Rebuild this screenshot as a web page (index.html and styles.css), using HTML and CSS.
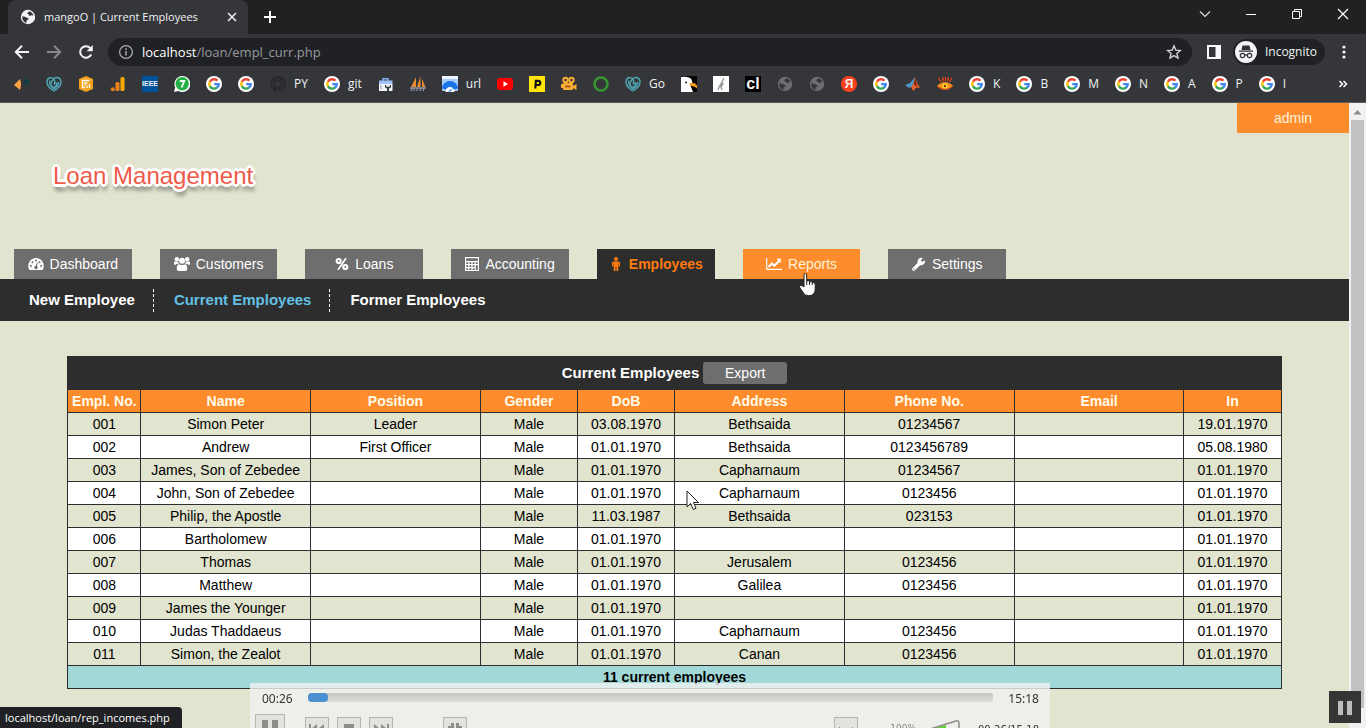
FILE: index.html
```html
<!DOCTYPE html>
<html lang="en">
<head>
<meta charset="utf-8">
<title>mangoO | Current Employees</title>
<link rel="stylesheet" href="styles.css">
</head>
<body>
<svg class="sprite" aria-hidden="true">
  <symbol id="google" viewBox="0 0 16 16">
    <circle cx="8" cy="8" r="8" fill="#fff"/>
    <g fill="none" stroke-width="2.400">
      <path d="M11.5 4.7A4.7 4.7 0 0 0 3.9 5.8" stroke="#ea4335"/>
      <path d="M3.9 5.7A4.7 4.7 0 0 0 3.9 10.3" stroke="#fbbc05"/>
      <path d="M3.9 10.2A4.7 4.7 0 0 0 11.2 11.4" stroke="#34a853"/>
      <path d="M11 11.6A4.7 4.7 0 0 0 12.7 8.1H8.2" stroke="#4285f4"/>
    </g>
  </symbol>
  <symbol id="globe" viewBox="0 0 16 16">
    <circle cx="8" cy="8" r="7.200" fill="currentColor"/>
    <path d="M2.300 7.200c1.500.5 3.300.3 4.200 1.200.8.8 2 .4 2.100 1.400.1 1-1.600.9-1.900 1.900-.2.700-.2 1.300-.3 2.200-2.700-.8-4.600-3.700-4.100-6.700zM9 2.300c.3.900-1.600 1.100-1.700 1.900 0 .9 1.500.7 1.600 1.700.1 1 1.300 1.100 1.900.7.700-.5 1.700-.4 2.500.2C13 4.400 11.300 2.700 9 2.300z" fill="#35363a"/>
  </symbol>
  <symbol id="gecko" viewBox="0 0 16 16">
    <g fill="none" stroke="#4fa9b8" stroke-width="1.400">
      <path d="M8 15C3 12 .8 8.500 1 5.500 1.300 1.500 6 .3 8 3.300c1 1.700.8 3.600 0 5.200"/>
      <path d="M8 15c5-3 7.200-6.500 7-9.500C14.700 1.500 10 .3 7.500 3 5.200 5.500 4.300 8.800 6 10.500c2 1.800 4.700 0 5-3.300H8.500"/>
      <path d="M3.800 4.500C3 8 4.800 10.800 8 12.800c2.800-1.700 4.600-4 4.800-6.800"/>
    </g>
  </symbol>
</svg>

<header class="browser">
  <div class="tabstrip">
    <div class="tab">
      <svg class="i16"><use href="#globe"/></svg>
      <span class="tab-title">mangoO | Current Employees</span>
      <button class="bare" aria-label="Close tab"><svg class="i12" viewBox="0 0 12 12"><path d="M2 2l8 8M10 2l-8 8" stroke="#e8eaed" stroke-width="1.600"/></svg></button>
    </div>
    <button class="bare newtab" aria-label="New tab"><svg class="i14" viewBox="0 0 14 14"><path d="M7 1v12M1 7h12" stroke="#fff" stroke-width="2"/></svg></button>
    <div class="window-buttons">
      <button class="bare" aria-label="Search tabs"><svg class="i12" viewBox="0 0 12 12"><path d="M1 3.500l5 5 5-5" fill="none" stroke="#ddd" stroke-width="1.200"/></svg></button>
      <button class="bare" aria-label="Minimize"><svg class="i12" viewBox="0 0 12 12"><path d="M1 6.500h10" stroke="#fff"/></svg></button>
      <button class="bare" aria-label="Restore"><svg class="i12" viewBox="0 0 12 12"><path d="M1.500 3.500h7v7h-7zM3.500 3.500v-2h7v7h-2" fill="none" stroke="#fff"/></svg></button>
      <button class="bare" aria-label="Close"><svg class="i12" viewBox="0 0 12 12"><path d="M1 1l10 10M11 1L1 11" stroke="#fff" stroke-width="1.200"/></svg></button>
    </div>
  </div>

  <div class="toolbar">
    <button class="bare" aria-label="Back"><svg class="i16" viewBox="0 0 16 16"><path d="M15 8H2M8 1.800L1.800 8 8 14.200" fill="none" stroke="#f1f3f4" stroke-width="2"/></svg></button>
    <button class="bare" aria-label="Forward"><svg class="i16" viewBox="0 0 16 16"><path d="M1 8h13M8 1.800L14.200 8 8 14.200" fill="none" stroke="#85878a" stroke-width="2"/></svg></button>
    <button class="bare" aria-label="Reload"><svg class="i16" viewBox="0 0 16 16"><path d="M13.200 10.500A5.800 5.800 0 1 1 12.400 4.200" fill="none" stroke="#f1f3f4" stroke-width="2"/><path d="M14.800 1v6.200H8.600z" fill="#f1f3f4"/></svg></button>
    <div class="omnibox">
      <svg class="i16" viewBox="0 0 16 16"><circle cx="8" cy="8" r="6.400" fill="none" stroke="#a6a9ad" stroke-width="1.300"/><path d="M8 7v4.500M8 4.300v1.600" stroke="#a6a9ad" stroke-width="1.500"/></svg>
      <span class="url"><b>localhost</b>/loan/empl_curr.php</span>
      <svg class="i16" viewBox="0 0 16 16"><path d="M8 1.800l1.800 4.300 4.600.4-3.500 3 1.100 4.500-4-2.400L4 14l1.100-4.500-3.500-3 4.600-.4z" fill="none" stroke="#cfd1d4" stroke-width="1.400"/></svg>
    </div>
    <button class="bare panel-button" aria-label="Side panel"><svg class="i14" viewBox="0 0 14 14"><path d="M0 0h14v14H0zM2 2v10h6.500V2z" fill="#f8f8fa" fill-rule="evenodd"/></svg></button>
    <div class="incognito">
      <svg class="i22" viewBox="0 0 22 22"><circle cx="11" cy="11" r="11" fill="#f1f3f4"/><path d="M7.500 4.500h7L15.500 9h-9zM4 9.500h14v1.200H4z" fill="#303134"/><g fill="none" stroke="#303134" stroke-width="1.200"><circle cx="7.500" cy="14.500" r="2.200"/><circle cx="14.500" cy="14.500" r="2.200"/><path d="M9.700 14.300q1.300-.8 2.600 0"/></g></svg>
      <span>Incognito</span>
    </div>
    <button class="bare" aria-label="Menu"><svg class="i16" viewBox="0 0 16 16" fill="#f1f3f4"><circle cx="8" cy="3" r="1.600"/><circle cx="8" cy="8" r="1.600"/><circle cx="8" cy="13" r="1.600"/></svg></button>
  </div>

  <nav class="bookmarks" aria-label="Bookmarks">
    <a href="#" aria-label="Kite"><svg class="i16" viewBox="0 0 16 16"><path d="M0 9l6-6q2 6 0 11z" fill="#ffa347"/><path d="M10 2l6 4-5 4z" fill="#0b3c44"/></svg></a>
    <a href="#" aria-label="Gecko"><svg class="i16"><use href="#gecko"/></svg></a>
    <a href="#" aria-label="Stats"><svg class="i16" viewBox="0 0 16 16"><path d="M8 0l7 3v10l-7 3-7-3V3z" fill="#f3a11c"/><path d="M11.500 4.500H4.500v7H7M9.500 7H7v2.500M9 12V9.500M11.500 12V8" fill="none" stroke="#fff" stroke-width="1.300"/></svg></a>
    <a href="#" aria-label="Analytics"><svg class="i16" viewBox="0 0 16 16"><rect x="10.500" y="1" width="4" height="14" rx="1.500" fill="#f9ab00"/><rect x="5.500" y="6" width="4" height="9" rx="1.500" fill="#e8821e"/><circle cx="2.800" cy="13.200" r="2" fill="#e8821e"/></svg></a>
    <a href="#" aria-label="IEEE"><span class="fav ieee">IEEE</span></a>
    <a href="#" aria-label="Chat"><svg class="i16" viewBox="0 0 16 16"><path d="M0 16L1.200 11.500A8 8 0 1 1 4.500 15z" fill="#fff"/><circle cx="8.200" cy="7.800" r="6.700" fill="#25b045"/><path d="M5.800 5h4.400L7.600 11.500" fill="none" stroke="#fff" stroke-width="1.800"/></svg></a>
    <a href="#" aria-label="Google"><svg class="i16"><use href="#google"/></svg></a>
    <a href="#" aria-label="Google"><svg class="i16"><use href="#google"/></svg></a>
    <a href="#"><svg class="i16" viewBox="0 0 16 16"><path d="M8 1a7 7 0 0 0-2.200 13.600c.4 0 .5-.2.500-.5v-1.600c-2 .4-2.600-1-2.900-1.700M8 1a7 7 0 0 1 2.200 13.600c-.4 0-.5-.2-.5-.5V12c0-.7-.2-1.100-.5-1.400 3-.4 3.600-3.600 2.200-5.100V3.700c-.9 0-1.600.5-2 .8H6.600c-.4-.3-1.100-.8-2-.8v1.800c-1.400 1.500-.8 4.700 2.200 5.100" fill="none" stroke="#26282b" stroke-width="1.800"/></svg>PY</a>
    <a href="#"><svg class="i16"><use href="#google"/></svg>git</a>
    <a href="#" aria-label="Toolbox"><svg class="i16" viewBox="0 0 16 16"><path d="M5 5V2.800h5V5" fill="none" stroke="#8ab4f8" stroke-width="1.400"/><rect x="1" y="4.500" width="13.500" height="3.500" fill="#9fc2fb"/><rect x="1" y="8" width="13.500" height="7" fill="#f1f3f4"/><path d="M7 9v2.500l2 1V15h2v-2.500l2-1V9h-1.300v1.700H8.300V9z" fill="#3c4043"/><path d="M3 9v4" stroke="#9aa0a6"/></svg></a>
    <a href="#" aria-label="Sails"><svg class="i16" viewBox="0 0 16 16"><path d="M6 1L1 11h5zM10.500 0L7 11h3.500zM12 3v8h3.500z" fill="#e78b2f"/><path d="M0 12h16M1 15l1-3M4 15v-3M7 15v-3M10 15l1-3M13 15l1-3" stroke="#8d93a8" stroke-width="1.300"/></svg></a>
    <a href="#"><svg class="i16" viewBox="0 0 16 16"><rect width="16" height="15" rx="1" fill="#a8cdfd"/><rect width="16" height="3" fill="#eef5ff"/><path d="M0 12.500a8 7.500 0 0 1 16 0l-4 1H4z" fill="#1a73e8"/><path d="M3.500 16a4.500 5 0 0 1 9 0z" fill="#fff"/><path d="M6 15.500l5-3.500-2.500 3.500z" fill="#1a73e8"/></svg>url</a>
    <a href="#" aria-label="YouTube"><svg class="i16" viewBox="0 0 16 16"><rect y="2" width="16" height="12" rx="3" fill="#f00"/><path d="M6.500 5.200v5.600L11 8z" fill="#fff"/></svg></a>
    <a href="#" aria-label="P"><svg class="i16" viewBox="0 0 16 16"><rect width="16" height="16" fill="#ffe50b"/><path d="M6.300 12.500L6.900 4.900h2.300a2 2 0 0 1 0 4.100H6.800" fill="none" stroke="#111" stroke-width="2.200"/></svg></a>
    <a href="#" aria-label="Camera"><svg class="i16" viewBox="0 0 16 16"><g fill="#f9ae33"><circle cx="4.500" cy="4" r="3.200"/><circle cx="10.500" cy="4" r="3.200"/><rect x="2" y="7" width="10" height="7" rx="1"/><path d="M12 10l3.500-2v6L12 12zM0 8h3v4H0z"/></g><circle cx="4.500" cy="4" r="1.200" fill="#35363a"/><circle cx="10.500" cy="4" r="1.200" fill="#35363a"/><path d="M4 10.500h5.500" stroke="#a5550d" stroke-width="1.800"/></svg></a>
    <a href="#" aria-label="Ring"><svg class="i16" viewBox="0 0 16 16"><circle cx="8" cy="8" r="6.500" fill="none" stroke="#35962f" stroke-width="2.600"/></svg></a>
    <a href="#"><svg class="i16"><use href="#gecko"/></svg>Go</a>
    <a href="#" aria-label="Eagle"><svg class="i16" viewBox="0 0 16 16"><rect width="16" height="16" fill="#050505"/><path d="M0 1q8-1 10.500 2.500 1 2 .5 4L9 8.500 12 16H0z" fill="#fff"/><path d="M8.500 7.500q5-2 7.500 2v3q-2-3-7-2.500z" fill="#f49b24"/><circle cx="5" cy="6.500" r="1" fill="#222"/></svg></a>
    <a href="#" aria-label="Sketch"><svg class="i16" viewBox="0 0 16 16"><rect width="16" height="16" fill="#fff"/><path d="M11 2l-2 4 1 2-2 3 1 3M9 6L6 11l-1 3M9 8l-2 3" fill="none" stroke="#9b9b9b" stroke-width="1.400"/></svg></a>
    <a href="#" aria-label="cl"><span class="fav cl">cl</span></a>
    <a href="#" aria-label="Site"><svg class="i16 dim"><use href="#globe"/></svg></a>
    <a href="#" aria-label="Site"><svg class="i16 dim"><use href="#globe"/></svg></a>
    <a href="#" aria-label="Yandex"><span class="fav yandex">Я</span></a>
    <a href="#" aria-label="Google"><svg class="i16"><use href="#google"/></svg></a>
    <a href="#" aria-label="Matlab"><svg class="i16" viewBox="0 0 16 16"><path d="M0 9l5-2 5-6-2 9-4 2z" fill="#4d95c9"/><path d="M10 1q2 7 5 11-3-1-4 0l-3 3-2-4q3-3 4-10z" fill="#e2622c"/><path d="M10 1l-1 7 3 3z" fill="#6d1f12"/></svg></a>
    <a href="#" aria-label="Eye"><svg class="i16" viewBox="0 0 16 16"><path d="M0 10q4-4 8-4t8 4q-4 4-8 4t-8-4z" fill="#f7941d"/><path d="M1.500 2L4 6M5.500 1L6.500 5M8.500 1v4M11.500 1L10.500 5M15 2L12.500 6" stroke="#e8401c" stroke-width="1.400"/><circle cx="8" cy="10" r="2.500" fill="#ffde37"/><circle cx="8" cy="10" r="1.200" fill="#8b2a0b"/><path d="M0 10q8 7 16 0" fill="none" stroke="#d3401c"/></svg></a>
    <a href="#"><svg class="i16"><use href="#google"/></svg>K</a>
    <a href="#"><svg class="i16"><use href="#google"/></svg>B</a>
    <a href="#"><svg class="i16"><use href="#google"/></svg>M</a>
    <a href="#"><svg class="i16"><use href="#google"/></svg>N</a>
    <a href="#"><svg class="i16"><use href="#google"/></svg>A</a>
    <a href="#"><svg class="i16"><use href="#google"/></svg>P</a>
    <a href="#"><svg class="i16"><use href="#google"/></svg>I</a>
    <button class="bare more" aria-label="More bookmarks"><svg class="i12" viewBox="0 0 12 12"><path d="M2.500 3l3 3-3 3M6.500 3l3 3-3 3" fill="none" stroke="#fff" stroke-width="1.500"/></svg></button>
  </nav>
</header>

<div class="viewport">
  <main class="page">
    <div class="banner">
      <a class="user" href="#">admin</a>
      <h1 class="brand">Loan Management</h1>
    </div>

    <nav class="tabs" aria-label="Main">
      <a href="#"><svg class="i16" viewBox="0 0 16 16"><path d="M8 2a8 8 0 0 0-6.700 12h13.400A8 8 0 0 0 8 2z" fill="#fff"/><g fill="#6e6e6e"><circle cx="2.900" cy="10" r="1"/><circle cx="4.500" cy="6.300" r="1"/><circle cx="8" cy="4.500" r="1"/><circle cx="11.500" cy="6.300" r="1"/><circle cx="13.100" cy="10" r="1"/><circle cx="8" cy="11.500" r="1.700"/><path d="M7.400 11L8.900 6.400l.8.200L8.700 11.500z"/></g></svg>Dashboard</a>
      <a href="#"><svg class="i16" viewBox="0 0 16 16" fill="#fff"><circle cx="2.800" cy="3.300" r="2.200"/><circle cx="13.200" cy="3.300" r="2.200"/><circle cx="8" cy="4.800" r="3"/><path d="M0 6.500q0-1.300 1.200-1L4.300 5.800q.2 1.300 1 2H3L1 9Q0 9 0 8zM16 6.500q0-1.300-1.200-1l-3.100.3q-.2 1.300-1 2H13l2 1.200q1 0 1-1zM4.500 8.300q3.500 1.500 7 0Q13.300 9 13.300 13q0 2-2 2H4.700q-2 0-2-2 0-4 1.800-4.700z"/></svg>Customers</a>
      <a href="#"><svg class="i14" viewBox="0 0 14 14" fill="none" stroke="#fff"><circle cx="3.700" cy="4" r="2" stroke-width="2.200"/><circle cx="10.300" cy="10" r="2" stroke-width="2.200"/><path d="M11 1.200L3 12.800" stroke-width="1.700"/></svg>Loans</a>
      <a href="#"><svg class="i14" viewBox="0 0 14 14"><path d="M0 0h14v14H0zM1.200 1.200v2.800h11.600V1.200zM1.200 5.200v1.800h2V5.200zM4.400 5.200v1.800h2V5.200zM7.600 5.200v1.800h2V5.200zM10.800 5.200v1.800h2V5.200zM1.200 8.200V10h2V8.200zM4.400 8.200V10h2V8.200zM7.600 8.200V10h2V8.200zM1.200 11.200v1.700h2v-1.700zM4.400 11.200v1.700h2v-1.700zM7.600 11.200v1.700h2v-1.700zM10.800 8.200v4.700h2V8.200z" fill="#fff" fill-rule="evenodd"/></svg>Accounting</a>
      <a class="active" href="#"><svg class="i14" viewBox="0 0 14 14" fill="#ff7a0d"><circle cx="7" cy="2" r="2"/><path d="M4.500 4.500h5Q11 4.500 11 6v3.500H9.700V6.500h-.4V14H7.400v-4h-.8v4H4.700V6.500h-.4v3H3V6q0-1.500 1.500-1.500z"/></svg>Employees</a>
      <a class="hover" href="#"><svg class="i16" viewBox="0 0 16 16" fill="none" stroke="#fff"><path d="M.7 2v11.300H16" stroke-width="1.200"/><path d="M2.500 11L6 7.500l2.300 2.300L13 5" stroke-width="2"/><path d="M10.300 2.800h4.500v4.500z" fill="#fff" stroke="none"/></svg>Reports
        <svg class="hand" viewBox="0 0 18 24"><path d="M5 2q0-1.500 1.300-1.500T7.700 2v6q2.400-1 2.800.8 2-.8 2.700.9 3-.7 3 1.500v5q0 3-1.500 4.500-1.500 2-5 2Q6 22.700 4.500 20L1 15q-1-2 .5-2.500T5 14z" fill="#fff" stroke="#222" stroke-width="1"/><path d="M7.700 8v4M10.500 8.500V12M13.200 9.500V12" stroke="#222"/></svg>
      </a>
      <a href="#"><svg class="i14" viewBox="0 0 14 14"><path d="M12.800 3.200L10.300 5 8.900 3.600 10.800.9A4 4 0 0 0 5.700 5.800L.6 10.900a1.600 1.600 0 0 0 2.400 2.400L8.100 8.200a4 4 0 0 0 4.700-5z" fill="#fff"/><circle cx="2" cy="12" r=".7" fill="#6e6e6e"/></svg>Settings</a>
    </nav>
    <nav class="subnav" aria-label="Employees">
      <a href="#">New Employee</a>
      <a class="current" href="#">Current Employees</a>
      <a href="#">Former Employees</a>
    </nav>

    <table class="grid">
      <colgroup><col class="c-no"><col class="c-wide"><col class="c-wide"><col class="c-small"><col class="c-small"><col class="c-wide"><col class="c-wide"><col class="c-wide"><col class="c-small"></colgroup>
      <thead>
        <tr class="title"><th colspan="9"><div class="title-row">Current Employees <button class="export" type="button">Export</button></div></th></tr>
        <tr class="heads"><th>Empl. No.</th><th>Name</th><th>Position</th><th>Gender</th><th>DoB</th><th>Address</th><th>Phone No.</th><th>Email</th><th>In</th></tr>
      </thead>
      <tbody>
        <tr><td>001</td><td>Simon Peter</td><td>Leader</td><td>Male</td><td>03.08.1970</td><td>Bethsaida</td><td>01234567</td><td></td><td>19.01.1970</td></tr>
        <tr><td>002</td><td>Andrew</td><td>First Officer</td><td>Male</td><td>01.01.1970</td><td>Bethsaida</td><td>0123456789</td><td></td><td>05.08.1980</td></tr>
        <tr><td>003</td><td>James, Son of Zebedee</td><td></td><td>Male</td><td>01.01.1970</td><td>Capharnaum</td><td>01234567</td><td></td><td>01.01.1970</td></tr>
        <tr><td>004</td><td>John, Son of Zebedee</td><td></td><td>Male</td><td>01.01.1970</td><td>Capharnaum</td><td>0123456</td><td></td><td>01.01.1970</td></tr>
        <tr><td>005</td><td>Philip, the Apostle</td><td></td><td>Male</td><td>11.03.1987</td><td>Bethsaida</td><td>023153</td><td></td><td>01.01.1970</td></tr>
        <tr><td>006</td><td>Bartholomew</td><td></td><td>Male</td><td>01.01.1970</td><td></td><td></td><td></td><td>01.01.1970</td></tr>
        <tr><td>007</td><td>Thomas</td><td></td><td>Male</td><td>01.01.1970</td><td>Jerusalem</td><td>0123456</td><td></td><td>01.01.1970</td></tr>
        <tr><td>008</td><td>Matthew</td><td></td><td>Male</td><td>01.01.1970</td><td>Galilea</td><td>0123456</td><td></td><td>01.01.1970</td></tr>
        <tr><td>009</td><td>James the Younger</td><td></td><td>Male</td><td>01.01.1970</td><td></td><td></td><td></td><td>01.01.1970</td></tr>
        <tr><td>010</td><td>Judas Thaddaeus</td><td></td><td>Male</td><td>01.01.1970</td><td>Capharnaum</td><td>0123456</td><td></td><td>01.01.1970</td></tr>
        <tr><td>011</td><td>Simon, the Zealot</td><td></td><td>Male</td><td>01.01.1970</td><td>Canan</td><td>0123456</td><td></td><td>01.01.1970</td></tr>
      </tbody>
      <tfoot><tr><td colspan="9">11 current employees</td></tr></tfoot>
    </table>
  </main>
  <div class="scrollbar" aria-hidden="true">
    <svg viewBox="0 0 14 17"><path d="M2.500 11.500L6.500 7l4 4.500z" fill="#8a8a8a"/></svg>
    <div class="thumb"></div>
  </div>
</div>

<div class="status">localhost/loan/rep_incomes.php</div>

<section class="player" aria-label="Video controls">
  <div class="seek">
    <span>00:26</span>
    <div class="track"><div class="played"></div></div>
    <span>15:18</span>
  </div>
  <div class="controls">
    <button class="key big" aria-label="Pause"><svg viewBox="0 0 28 28"><path d="M6 5h6v18H6zM16 5h6v18h-6z"/></svg></button>
    <button class="key prev" aria-label="Previous"><svg viewBox="0 0 22 22"><path d="M3 6h2v10H3zM5 11l6-5v10zM12 11l6-5v10z"/></svg></button>
    <button class="key" aria-label="Stop"><svg viewBox="0 0 22 22"><path d="M6 6h10v10H6z"/></svg></button>
    <button class="key" aria-label="Next"><svg viewBox="0 0 22 22"><path d="M17 6h2v10h-2zM17 11l-6-5v10zM10 11L4 6v10z"/></svg></button>
    <button class="key full" aria-label="Fullscreen"><svg viewBox="0 0 22 22"><path d="M7 5h3v5H4V8h3zM12 5h3v3h3v2h-6zM4 12h6v5H7v-3H4zM12 12h6v2h-3v3h-3z"/></svg></button>
    <button class="key ext" aria-label="Extended settings"><svg viewBox="0 0 22 22"><path d="M4 9h1v1h12V9h1v9H4z"/></svg></button>
    <span class="percent">100%</span>
    <svg class="volume" viewBox="0 0 60 22"><path d="M2 18L46 6v12z" fill="#62cf2f"/><path d="M1 19L56 2q3-1 3 2v15z" fill="none" stroke="#8b8b8b" stroke-width="1.500"/></svg>
    <span class="elapsed">00:26/15:18</span>
  </div>
</section>

<svg class="arrow" viewBox="0 0 14 22"><path d="M1 1v16l3.700-3.500 2.600 6 2.700-1.200-2.500-5.800H12.500z" fill="#fff" stroke="#222"/></svg>
<button class="pause" aria-label="Pause recording"><svg viewBox="0 0 32 32"><path d="M9 10h5v14H9zM18 10h5v14h-5z" fill="#bdbdbd"/></svg></button>
</body>
</html>
```

FILE: styles.css
```css
* { box-sizing: border-box; }
body {
  margin: 0;
  height: 100vh;
  display: flex;
  flex-direction: column;
  overflow: hidden;
  background: #e1e4ce;
  font: 14px/16px "Liberation Sans", Arial, sans-serif;
}
a { color: inherit; text-decoration: none; }
svg { display: block; flex: none; }
.sprite { position: absolute; width: 0; height: 0; }
.i12 { width: 12px; height: 12px; }
.i14 { width: 14px; height: 14px; }
.i16 { width: 16px; height: 16px; }
.i22 { width: 22px; height: 22px; }
.bare { padding: 0; border: 0; background: none; display: flex; }

/* browser frame */
.browser {
  flex: none;
  background: #35363a;
  color: #f1f3f4;
  border-bottom: 1px solid #5c5c58;
  font: 12px/16px "Open Sans", "Noto Sans", sans-serif;
}
.tabstrip { height: 34px; display: flex; align-items: center; background: #202122; padding-left: 8px; }
.tab {
  width: 240px;
  height: 34px;
  padding: 0 10px 0 12px;
  display: flex;
  align-items: center;
  gap: 8px;
  background: #35363a;
  border-radius: 8px 8px 0 0;
  white-space: nowrap;
}
.tab-title { flex: 1; font-size: 11px; }
.newtab { margin-left: 15px; }
.window-buttons { margin-left: auto; display: flex; gap: 34px; padding-right: 17px; padding-bottom: 6px; }
.toolbar { height: 36px; display: flex; align-items: center; gap: 16px; padding: 0 14px; }
.omnibox {
  flex: 1;
  height: 28px;
  margin-left: -2px;
  padding: 0 10px;
  border-radius: 14px;
  background: #202124;
  display: flex;
  align-items: center;
  gap: 8px;
}
.url { flex: 1; font-size: 13px; color: #969a9e; }
.url b { font-weight: 400; color: #fff; }
.panel-button { margin: 0 -4px 0 -1px; }
.incognito {
  display: flex;
  align-items: center;
  gap: 8px;
  height: 26px;
  padding: 0 8px 0 2px;
  border-radius: 13px;
  background: #202124;
  margin-right: -5px;
}
.bookmarks { height: 32px; padding: 0 17px 4px 14px; display: flex; align-items: center; gap: 16px; }
.bookmarks a { display: flex; align-items: center; gap: 8px; }
.more { margin-left: auto; }
.dim { color: #6c6d70; }
.fav { width: 16px; height: 16px; display: block; text-align: center; overflow: hidden; }
.ieee { background: #00529b; font: bold 7px/16px "Liberation Sans", sans-serif; }
.cl { background: #000; font: bold 16px/15px "Liberation Sans", sans-serif; }
.yandex { background: #fc3f1d; border-radius: 8px; font: bold 12px/16px "Liberation Sans", sans-serif; }

/* page */
.viewport { flex: 1; min-height: 0; display: flex; }
.page { flex: 1; min-width: 0; overflow: hidden; }
.banner { height: 146px; display: flex; flex-direction: column; }
.user {
  align-self: flex-end;
  width: 112px;
  padding: 7px 0;
  text-align: center;
  color: #fff3dc;
  background: #fe8c2c;
}
.brand {
  margin: 29px 0 0 53px;
  font-size: 24px;
  line-height: 28px;
  font-weight: 400;
  color: #ee5a49;
  text-shadow: -3px 0 #fff, 3px 0 #fff, 0 -3px #fff, 0 3px #fff, -2px -2px #fff, 2px -2px #fff, -2px 2px #fff, 2px 2px #fff, 1px 6px 4px #444;
}
.tabs { display: flex; gap: 28px; padding-left: 14px; color: #fff; }
.tabs a {
  position: relative;
  width: 8.82%;
  height: 30px;
  display: flex;
  align-items: center;
  justify-content: center;
  gap: 6px;
  background: #6e6e6e;
}
.tabs .active { background: #2d2d2d; color: #ff7a0d; font-weight: 700; }
.tabs .hover { background: #fe8c2c; color: #fff3dc; }
.hand { position: absolute; left: 56px; top: 24px; width: 18px; height: 24px; z-index: 2; }
.subnav {
  height: 42px;
  padding-left: 14px;
  display: flex;
  align-items: center;
  background: #2d2d2d;
  color: #fff;
  font-size: 15px;
  font-weight: 700;
}
.subnav a { padding: 3px 18px 4px 15px; }
.subnav a + a { border-left: 1px dashed #fff; padding-left: 20px; }
.subnav .current { color: #63c0e3; }

.grid {
  width: 90%;
  margin: 35px auto 0;
  table-layout: fixed;
  border-collapse: collapse;
  text-align: center;
}
.c-no { width: 6%; }
.c-wide { width: 14%; }
.c-small { width: 8%; }
.grid th, .grid td { height: 23px; padding: 0; border: 1px solid #2d2d2d; white-space: nowrap; }
.grid .title th { height: 33px; background: #2d2d2d; color: #fff; font-size: 15px; }
.title-row { display: flex; align-items: center; justify-content: center; gap: 4px; }
.export {
  width: 84px;
  height: 22px;
  padding: 0;
  border: 0;
  border-radius: 3px;
  background: #6e6e6e;
  color: #fff;
  font: 14px/20px "Liberation Sans", Arial, sans-serif;
}
.heads th { background: #fe8c2c; color: #fffbea; }
.grid tbody tr:nth-child(even) { background: #fff; }
.grid tfoot td { background: #a2d8d7; font-weight: 700; }

.scrollbar { width: 17px; background: #f1f1f1; padding-left: 2px; }
.scrollbar svg { width: 14px; height: 17px; }
.thumb { width: 13px; height: 588px; background: #c1c1c1; }

/* overlays */
.status {
  position: fixed;
  left: 0;
  bottom: 0;
  padding: 3px 12px 2px 5px;
  border-radius: 0 4px 0 0;
  background: #202124;
  color: #fff;
  font: 11px/16px "Open Sans", "Noto Sans", sans-serif;
}
.player {
  position: fixed;
  left: 250px;
  right: 316px;
  bottom: 0;
  height: 45px;
  overflow: hidden;
  background: rgba(241, 241, 241, 0.8);
  color: #333;
  font: 11px/16px "DejaVu Sans", sans-serif;
}
.seek { display: flex; align-items: center; gap: 15px; padding: 8px 11px 0 12px; }
.seek span { font: 12px/16px "Noto Sans", sans-serif; }
.track { flex: 1; height: 9px; margin-bottom: 3px; border-radius: 3px; background: linear-gradient(#c4c5c1, #dcddd8); }
.played { width: 20px; height: 9px; border-radius: 4px; background: #4a90d0; }
.controls { display: flex; align-items: flex-start; gap: 8px; padding: 7px 11px 0 5px; }
.key { flex: none; width: 24px; height: 24px; margin-top: 3px; padding: 0; border: 1px solid #b4b5b1; background: #e2e3de; fill: #8d8e8b; }
.big { width: 30px; height: 30px; margin-top: 0; }
.prev { margin-left: 12px; }
.full { margin-left: 42px; }
.ext { margin-left: auto; }
.percent { margin: 6px 0 0 24px; font-size: 9px; color: #888; }
.volume { width: 60px; height: 22px; margin-top: 5px; margin-left: -24px; }
.elapsed { margin-top: 8px; margin-left: 10px; font-size: 10px; }
.arrow { position: fixed; left: 686px; top: 490px; width: 14px; height: 22px; }
.pause { position: fixed; right: 5px; bottom: 5px; width: 32px; height: 32px; padding: 0; border: 0; background: #353535; }
```
